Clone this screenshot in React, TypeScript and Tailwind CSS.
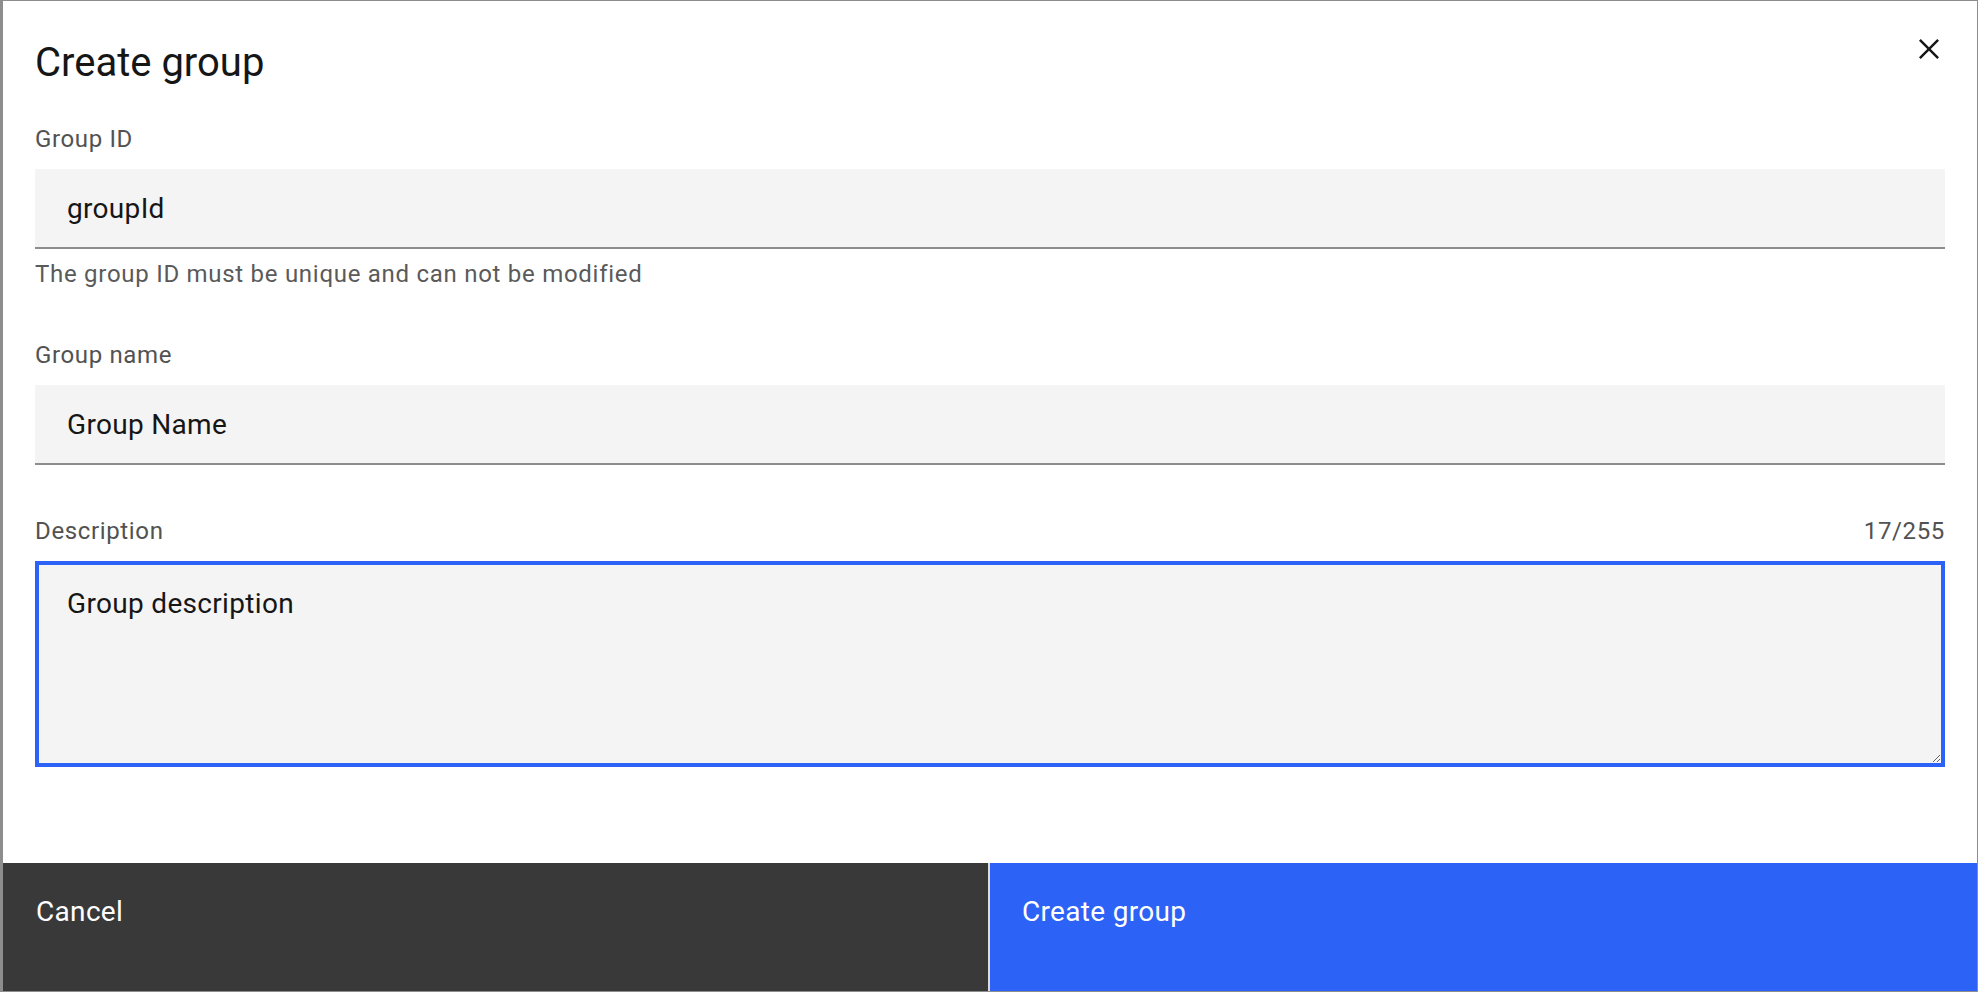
import React from 'react';

const font = { fontFamily: 'Roboto, "Noto Sans", Arial, sans-serif' };

function Label({ children, right }: { children: React.ReactNode; right?: string }) {
  return (
    <div className="flex justify-between pt-[2px] mb-[14px] text-[24px] leading-[32px] tracking-[0.64px] text-[#525252]">
      <span>{children}</span>
      {right && <span>{right}</span>}
    </div>
  );
}

function TextInput({ value }: { value: string }) {
  return (
    <div className="flex items-center h-[80px] px-[32px] pt-[2px] bg-[#f4f4f4] border-b-2 border-[#8d8d8d] text-[28px] tracking-[0.32px] text-[#161616]">
      {value}
    </div>
  );
}

export default function App() {
  const [desc, setDesc] = React.useState('Group description');

  return (
    <div
      className="relative flex flex-col w-[1978px] h-[992px] bg-white border border-l-[3px] border-[#8d8d8d]"
      style={font}
    >
      <header className="px-[32px] pt-[34px]">
        <h2 className="text-[40px] leading-[56px] text-[#161616]">Create group</h2>
      </header>

      <button className="absolute top-0 right-0 flex items-center justify-center w-[96px] h-[96px]">
        <svg width="40" height="40" viewBox="0 0 32 32" fill="#161616">
          <path d="M24 9.4L22.6 8 16 14.6 9.4 8 8 9.4 14.6 16 8 22.6 9.4 24 16 17.4 22.6 24 24 22.6 17.4 16 24 9.4z" />
        </svg>
      </button>

      <div className="flex-1 px-[32px] pt-[30px]">
        <div>
          <Label>Group ID</Label>
          <TextInput value="groupId" />
          <p className="mt-[8px] pt-[1px] text-[24px] leading-[32px] tracking-[0.72px] text-[#5a5a5a]">
            The group ID must be unique and can not be modified
          </p>
        </div>

        <div className="mt-[47px]">
          <Label>Group name</Label>
          <TextInput value="Group Name" />
        </div>

        <div className="mt-[48px]">
          <Label right={`${desc.length}/255`}>Description</Label>
          <textarea
            value={desc}
            onChange={(e) => setDesc(e.target.value)}
            className="block w-full h-[206px] px-[28px] pt-[19px] bg-[#f4f4f4] border-4 border-[#2c62f5] outline-none text-[28px] leading-[40px] tracking-[0.32px] text-[#161616]"
          />
        </div>
      </div>

      <footer className="grid grid-cols-2 h-[128px]">
        <button className="flex items-start pl-[33px] pt-[31px] bg-[#393939] border-r-2 border-[#dcdcdc] text-left text-[28px] leading-[36px] tracking-[0.32px] text-white">
          Cancel
        </button>
        <button className="flex items-start pl-[32px] pt-[31px] bg-[#2c62f5] text-left text-[28px] leading-[36px] tracking-[0.32px] text-white">
          Create group
        </button>
      </footer>
    </div>
  );
}
